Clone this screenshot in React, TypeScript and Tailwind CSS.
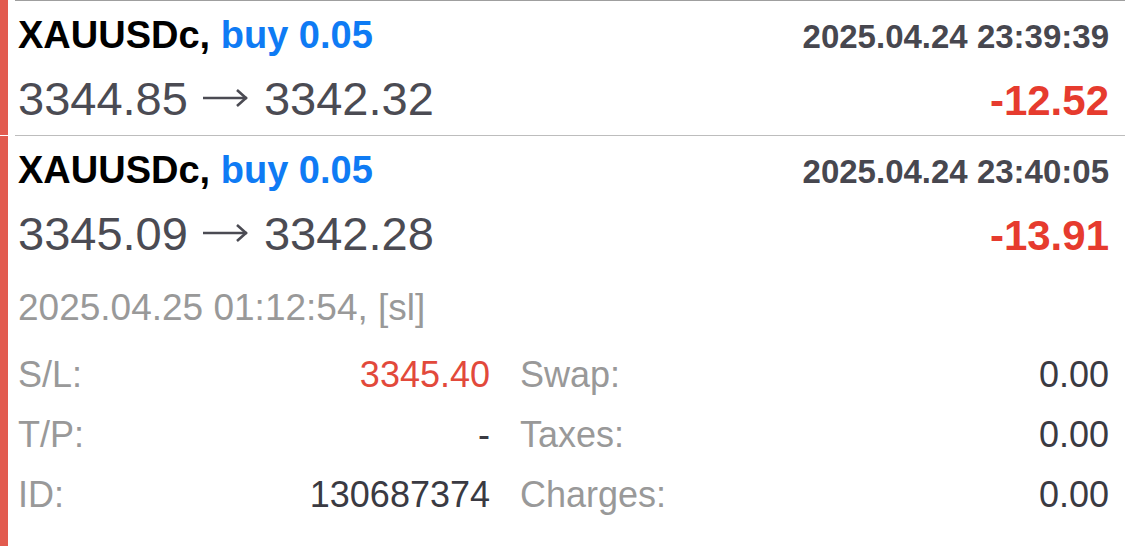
import React from 'react';

type Deal = {
  symbol: string;
  side: string;
  time: string;
  open: string;
  close: string;
  profit: string;
};

const deals: Deal[] = [
  { symbol: 'XAUUSDc', side: 'buy 0.05', time: '2025.04.24 23:39:39', open: '3344.85', close: '3342.32', profit: '-12.52' },
  { symbol: 'XAUUSDc', side: 'buy 0.05', time: '2025.04.24 23:40:05', open: '3345.09', close: '3342.28', profit: '-13.91' },
];

const Arrow = () => (
  <svg
    viewBox="0 0 46 18"
    className="mx-[15px] inline-block h-[18px] w-[46px] align-[8px]"
    fill="none"
    stroke="currentColor"
    strokeWidth="2.6"
  >
    <path d="M0 9h44" />
    <path d="M34 1l9 8-9 8" strokeLinejoin="miter" />
  </svg>
);

const DealHead: React.FC<{ deal: Deal }> = ({ deal }) => (
  <>
    <div className="flex items-baseline justify-between pt-[12px] pr-[16px] leading-[44px]">
      <span className="text-[38px] font-bold text-black">
        {deal.symbol}, <span className="text-[#0f7bf4]">{deal.side}</span>
      </span>
      <span className="text-[33px] font-bold text-[#47474f]">{deal.time}</span>
    </div>
    <div className="mt-[13px] flex items-baseline justify-between pr-[16px] leading-[54px]">
      <span className="text-[47px] text-[#4b4b53]">
        {deal.open}
        <Arrow />
        {deal.close}
      </span>
      <span className="text-[42px] font-bold text-[#e63b2e]">{deal.profit}</span>
    </div>
  </>
);

const Detail: React.FC<{ label: string; value: string; valueClass?: string }> = ({ label, value, valueClass }) => (
  <div className="flex h-[60px] items-center justify-between">
    <span className="text-[#999999]">{label}</span>
    <span className={valueClass ?? 'text-[#3a3a42]'}>{value}</span>
  </div>
);

export default function App() {
  return (
    <div className="h-[546px] w-[1125px] overflow-hidden bg-white font-['Liberation_Sans',Arial,sans-serif]">
      {/* first deal */}
      <div className="flex">
        <div className="w-[8px] bg-[#e25b4f]" />
        <div className="ml-[7px] flex-1 border-t border-[#9f9f9f] pb-[7px]">
          <div className="pl-[3px]">
            <DealHead deal={deals[0]} />
          </div>
        </div>
      </div>

      {/* second deal, expanded */}
      <div className="flex">
        <div className="mt-px w-[8px] bg-[#e25b4f]" />
        <div className="ml-[7px] flex-1 border-t border-[#bdbdbd] pb-[21px]">
          <div className="pl-[3px]">
            <DealHead deal={deals[1]} />
            <div className="mt-[15px] text-[37px] leading-[60px] text-[#999999]">2025.04.25 01:12:54, [sl]</div>
            <div className="mt-[7px] flex pr-[16px] text-[36px] leading-[60px]">
              <div className="w-[472px]">
                <Detail label="S/L:" value="3345.40" valueClass="text-[#e2493b]" />
                <Detail label="T/P:" value="-" />
                <Detail label="ID:" value="130687374" />
              </div>
              <div className="ml-[30px] flex-1">
                <Detail label="Swap:" value="0.00" />
                <Detail label="Taxes:" value="0.00" />
                <Detail label="Charges:" value="0.00" />
              </div>
            </div>
          </div>
        </div>
      </div>
    </div>
  );
}
